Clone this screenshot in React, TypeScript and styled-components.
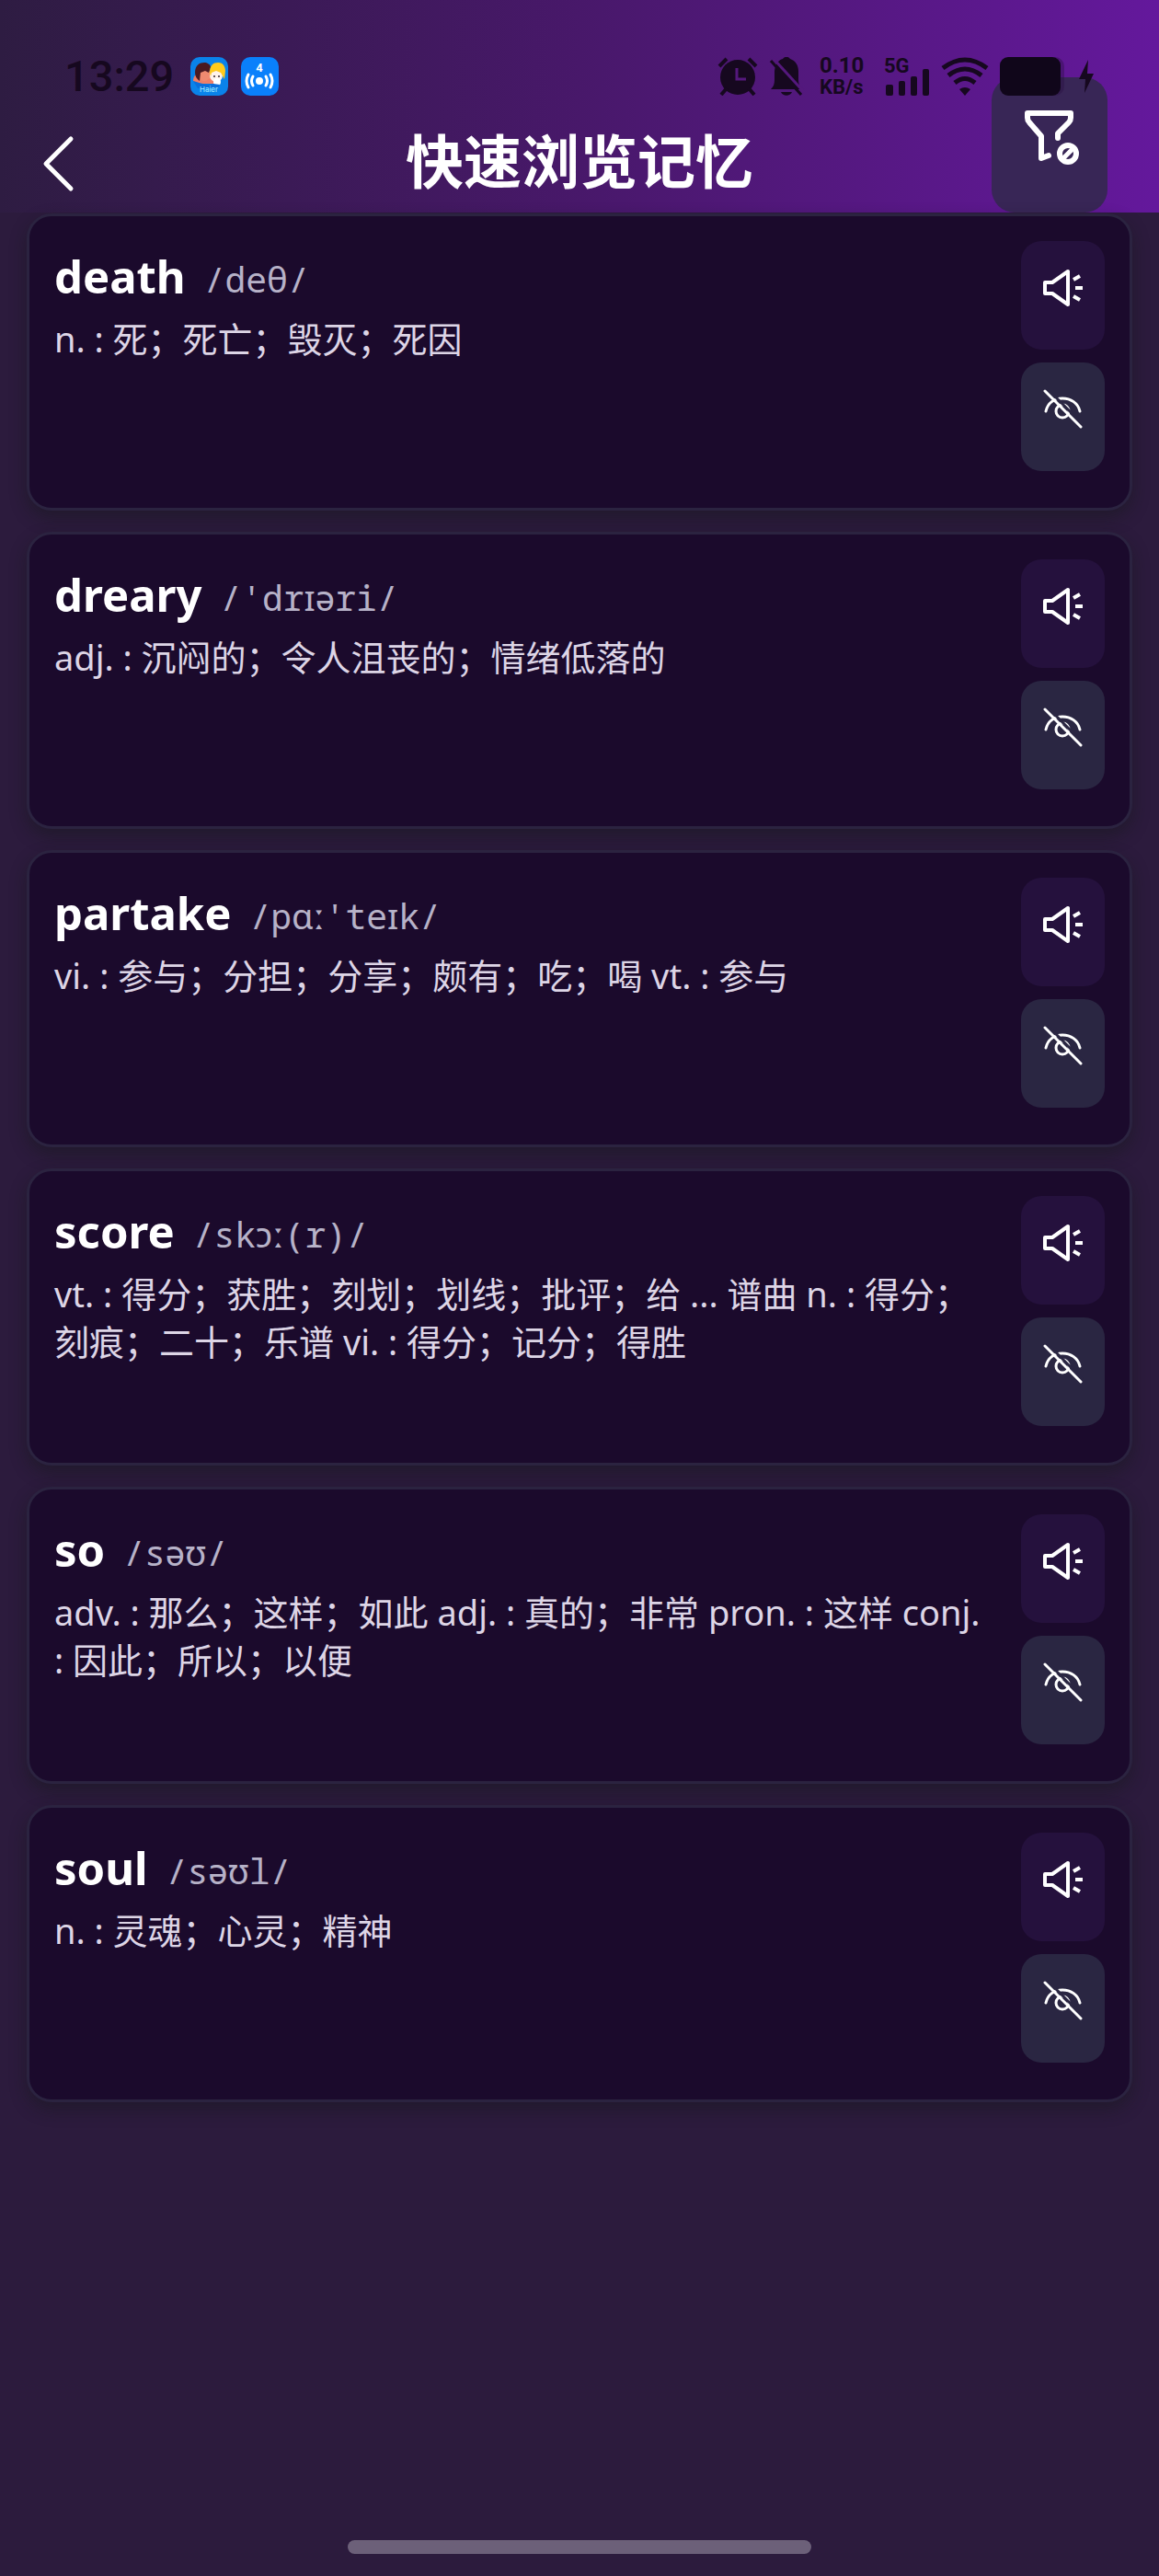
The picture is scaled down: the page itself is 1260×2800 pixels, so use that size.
import React from "react";
import styled, { createGlobalStyle } from "styled-components";

const sans = `"Noto Sans", "Noto Sans CJK SC", sans-serif`;
const mono = `"Noto Sans Mono", "DejaVu Sans Mono", monospace`;
const ink = "#16081f";

const GlobalStyle = createGlobalStyle`
  *, *::before, *::after { box-sizing: border-box; }
  body { margin: 0; background: #2c1b3d; }
`;

const Page = styled.div`
  position: relative;
  display: flex;
  flex-direction: column;
  min-height: 100vh;
  padding-bottom: 24px;
  background: #2c1b3d;
  color: #ffffff;
  font-family: ${sans};
`;

const StatusBar = styled.div`
  position: absolute;
  inset: 0 0 auto 0;
  z-index: 2;
  display: flex;
  justify-content: space-between;
  align-items: center;
  height: 104px;
  padding: 62px 71px 0 70px;
  color: ${ink};
  pointer-events: none;
`;

const StatusGroup = styled.div<{ $gap: number }>`
  display: flex;
  align-items: center;
  gap: ${(p) => p.$gap}px;
  height: 42px;
`;

const Clock = styled.time`
  margin-right: 4px;
  font: 500 47px/42px Roboto, sans-serif;
`;

const NetSpeed = styled.div`
  display: flex;
  flex-direction: column;
  width: 50px;
  margin: 0 8px 0 5px;
  font: 700 22px/24px Roboto, sans-serif;
  white-space: nowrap;
`;

const Rate = styled.span`
  font-size: 24px;
`;

const Header = styled.header`
  display: grid;
  grid-template-columns: 1fr auto 1fr;
  align-items: end;
  padding: 84px 56px 0;
  background: linear-gradient(90deg, #2e1c42 0%, #48186a 50%, #64189c 100%);
`;

const Title = styled.h1`
  margin: 0;
  font: 700 63px/112px ${sans};
`;

const PlainButton = styled.button`
  display: flex;
  align-items: center;
  justify-content: center;
  border: 0;
  padding: 0;
  color: inherit;
  background: transparent;
  cursor: pointer;
`;

const BackButton = styled(PlainButton)`
  width: 46px;
  height: 106px;
  margin-left: -15px;
`;

const FilterButton = styled(PlainButton)`
  justify-self: end;
  width: 126px;
  height: 147px;
  padding-bottom: 15px;
  border-radius: 25px;
  background: #382656;
`;

const WordList = styled.ul`
  display: flex;
  flex-direction: column;
  gap: 23px;
  margin: 1px 0 0;
  padding: 0 29px;
  list-style: none;
`;

const Card = styled.li`
  display: flex;
  gap: 30px;
  padding: 27px 27px 40px 27px;
  border: 3px solid #2b2340;
  border-radius: 27px;
  background: #1b0a2c;
  box-shadow: 0 8px 18px rgba(20, 24, 24, 0.45);
`;

const Entry = styled.div`
  flex: 1;
  min-width: 0;
  padding-top: 4px;
`;

const WordLine = styled.div`
  display: flex;
  align-items: flex-end;
  gap: 20px;
`;

const Word = styled.h2`
  margin: 0;
  font: 700 49px/68px ${sans};
`;

const Phonetic = styled.span`
  color: #b7b2c8;
  font: 400 38px/62px ${mono};
  white-space: nowrap;
`;

const Ipa = styled.span`
  font-family: "Noto Sans", sans-serif;
  line-height: 40px;
`;

const Meaning = styled.p`
  margin: 8px 0 0;
  color: #ddd5e6;
  font: 400 38px/52px ${sans};
`;

const Actions = styled.div`
  display: flex;
  flex-direction: column;
  gap: 14px;
`;

const ActionButton = styled(PlainButton)<{ $tone: "speak" | "hide" }>`
  width: 91px;
  height: 118px;
  padding-bottom: 18px;
  border-radius: 22px;
  background: ${(p) => (p.$tone === "speak" ? "#25113d" : "#2a2642")};
`;

const HomeIndicator = styled.div`
  width: 40%;
  height: 15px;
  margin: auto auto 0;
  border-radius: 8px;
  background: #6c6079;
`;

const BackIcon = () => (
  <svg width="46" height="66" viewBox="0 0 46 66" fill="none" stroke="currentColor" strokeWidth="5" strokeLinecap="round" strokeLinejoin="round" aria-hidden="true">
    <path d="M36 6 9 33l27 27" />
  </svg>
);

const FilterIcon = () => (
  <svg width="64" height="64" viewBox="0 0 64 64" fill="none" stroke="currentColor" strokeWidth="6" strokeLinejoin="round" strokeLinecap="round" aria-hidden="true">
    <path d="M41 32v-5l12-12c2-2 2-3 2-5V5H8v5c0 2 0 3 2 5l13 15v24l8-3" />
    <circle cx="52" cy="49" r="9" />
    <path d="m47 54 10-10" strokeWidth="5" />
  </svg>
);

const SpeakerIcon = () => (
  <svg width="44" height="44" viewBox="1 0 44 44" fill="none" stroke="currentColor" strokeWidth="4" aria-hidden="true">
    <path d="M3 17h8L28 5v36L11 29H3Z" strokeLinejoin="round" />
    <path d="m34 14 7-4M36 23h8M34 32l7 4" />
  </svg>
);

const EyeOffIcon = () => (
  <svg width="44" height="44" viewBox="1 1 44 44" fill="none" stroke="currentColor" strokeWidth="3" strokeLinecap="round" aria-hidden="true">
    <path d="M4 26C6 17 13 12 22 12s17 5 19 14" />
    <circle cx="22" cy="26" r="7" />
    <path d="m7 3 36 36" stroke="#2a2642" />
    <path d="m3 4 39 39" />
  </svg>
);

const FamilyAppIcon = () => (
  <svg width="41" height="42" viewBox="0 0 41 42" aria-hidden="true">
    <rect width="41" height="42" rx="10" fill="#0a83ea" />
    <path d="M3 26c0-6 4-8 7-9h12l6 12H13c-4 0-7-1-10-3Z" fill="#ef7f67" />
    <circle cx="15" cy="19" r="7" fill="#f08a70" />
    <path d="M5 17c0-8 5-11 10-11 3 0 7 2 7 5l-2 6-4-2-5 2-1 9c-3-2-5-5-5-9Z" fill="#4a1a22" />
    <circle cx="28" cy="20" r="7" fill="#fff3ea" />
    <path d="M21 17c0-8 4-11 9-11 6 0 8 5 8 9l-1 9-4-7-5-2-5 2-1 4Z" fill="#ffcb1c" />
    <circle cx="29" cy="27" r="4" fill="#fff" />
    <circle cx="26" cy="21" r="1" fill="#33232b" />
    <circle cx="31" cy="21" r="1" fill="#33232b" />
    <path d="M3 26c8 2 12 5 22 3l7 1-2 4H8Z" fill="#0a6fdc" />
    <text x="20" y="38" textAnchor="middle" fontFamily="Inter, sans-serif" fontSize="8" fill="#a8efff">Haier</text>
  </svg>
);

const HotspotAppIcon = () => (
  <svg width="41" height="42" viewBox="0 0 41 42" fill="none" stroke="#fff" strokeWidth="3" strokeLinecap="round" aria-hidden="true">
    <rect width="41" height="42" rx="10" fill="#0a80fb" stroke="none" />
    <text x="20" y="16" textAnchor="middle" fontFamily="Roboto, sans-serif" fontWeight="700" fontSize="13" fill="#fff" stroke="none">4</text>
    <circle cx="20" cy="26" r="4" fill="#fff" stroke="none" />
    <path d="M13 21q-3 5 0 10M27 21q3 5 0 10M8 19q-4 7 0 14M32 19q4 7 0 14" />
  </svg>
);

const AlarmIcon = () => (
  <svg width="44" height="42" viewBox="0 0 44 42" fill="none" stroke={ink} strokeWidth="4" aria-hidden="true">
    <circle cx="22" cy="22" r="19" fill={ink} stroke="none" />
    <path d="m2 10 8-8M42 10l-8-8M10 34l-6 7M34 34l6 7" />
    <path d="M21 12v12h10" stroke="#54187c" strokeWidth="3" />
  </svg>
);

const BellOffIcon = () => (
  <svg width="38" height="42" viewBox="0 0 38 42" aria-hidden="true">
    <path d="M2 35c3-3 4-6 4-10V15C7 7 11 3 15 2c2-3 6-3 8 0 6 2 9 7 9 14v9c0 4 1 7 4 10Z" fill={ink} />
    <path d="M13 38h12c-2 5-10 5-12 0Z" fill={ink} />
    <path d="m5 2 33 36" stroke="#54187c" strokeWidth="3" />
    <path d="m2 4 33 37" stroke={ink} strokeWidth="3" />
  </svg>
);

const SignalIcon = () => (
  <svg width="50" height="50" viewBox="0 -4 50 50" fill={ink} aria-hidden="true">
    <text x="0" y="17" fontFamily="Roboto, sans-serif" fontWeight="700" fontSize="22">5G</text>
    <rect x="2" y="30" width="8" height="12" rx="2" />
    <rect x="16" y="26" width="7" height="16" rx="2" />
    <rect x="29" y="21" width="7" height="21" rx="2" />
    <rect x="42" y="13" width="7" height="29" rx="2" />
  </svg>
);

const WifiIcon = () => (
  <svg width="52" height="42" viewBox="0 0 52 42" fill="none" stroke={ink} strokeWidth="5" aria-hidden="true">
    <path d="M2 12q24-18 48 0M8 20q18-14 36 0M15 28q11-9 22 0" />
    <path d="M20 35q6-4 12 0l-6 7Z" fill={ink} stroke="none" />
  </svg>
);

const BatteryIcon = () => (
  <svg width="74" height="42" viewBox="0 0 74 42" aria-hidden="true">
    <rect x="4" width="66" height="42" rx="10" fill="#2a1044" opacity="0.4" />
    <rect width="66" height="42" rx="9" fill="#10061a" />
  </svg>
);

const BoltIcon = () => (
  <svg width="16" height="36" viewBox="0 0 16 36" fill={ink} aria-hidden="true">
    <path d="M10 0 0 21h7L6 36l10-21H9Z" />
  </svg>
);

const entries = [
  { word: "death", phonetic: "/deθ/", meaning: "n. : 死；死亡；毁灭；死因" },
  { word: "dreary", phonetic: "/'drɪəri/", meaning: "adj. : 沉闷的；令人沮丧的；情绪低落的" },
  { word: "partake", phonetic: "/pɑː'teɪk/", meaning: "vi. : 参与；分担；分享；颇有；吃；喝 vt. : 参与" },
  { word: "score", phonetic: "/skɔː(r)/", meaning: "vt. : 得分；获胜；刻划；划线；批评；给 ... 谱曲 n. : 得分；刻痕；二十；乐谱 vi. : 得分；记分；得胜" },
  { word: "so", phonetic: "/səʊ/", meaning: "adv. : 那么；这样；如此 adj. : 真的；非常 pron. : 这样 conj. : 因此；所以；以便" },
  { word: "soul", phonetic: "/səʊl/", meaning: "n. : 灵魂；心灵；精神" },
];

// IPA letters are set in the proportional face, the rest in monospace.
const renderPhonetic = (text: string) =>
  text.split(/([ɪəɑːɔʊ]+)/).map((part, i) => (i % 2 ? <Ipa key={i}>{part}</Ipa> : part));

export default function App() {
  return (
    <Page>
      <GlobalStyle />
      <StatusBar>
        <StatusGroup $gap={14}>
          <Clock>13:29</Clock>
          <FamilyAppIcon />
          <HotspotAppIcon />
        </StatusGroup>
        <StatusGroup $gap={12}>
          <AlarmIcon />
          <BellOffIcon />
          <NetSpeed>
            <Rate>0.10</Rate>
            <span>KB/s</span>
          </NetSpeed>
          <SignalIcon />
          <WifiIcon />
          <BatteryIcon />
          <BoltIcon />
        </StatusGroup>
      </StatusBar>
      <Header>
        <BackButton type="button" aria-label="返回">
          <BackIcon />
        </BackButton>
        <Title>快速浏览记忆</Title>
        <FilterButton type="button" aria-label="筛选">
          <FilterIcon />
        </FilterButton>
      </Header>
      <WordList>
        {entries.map((e) => (
          <Card key={e.word}>
            <Entry>
              <WordLine>
                <Word>{e.word}</Word>
                <Phonetic>{renderPhonetic(e.phonetic)}</Phonetic>
              </WordLine>
              <Meaning>{e.meaning}</Meaning>
            </Entry>
            <Actions>
              <ActionButton type="button" $tone="speak" aria-label="发音">
                <SpeakerIcon />
              </ActionButton>
              <ActionButton type="button" $tone="hide" aria-label="隐藏">
                <EyeOffIcon />
              </ActionButton>
            </Actions>
          </Card>
        ))}
      </WordList>
      <HomeIndicator />
    </Page>
  );
}
